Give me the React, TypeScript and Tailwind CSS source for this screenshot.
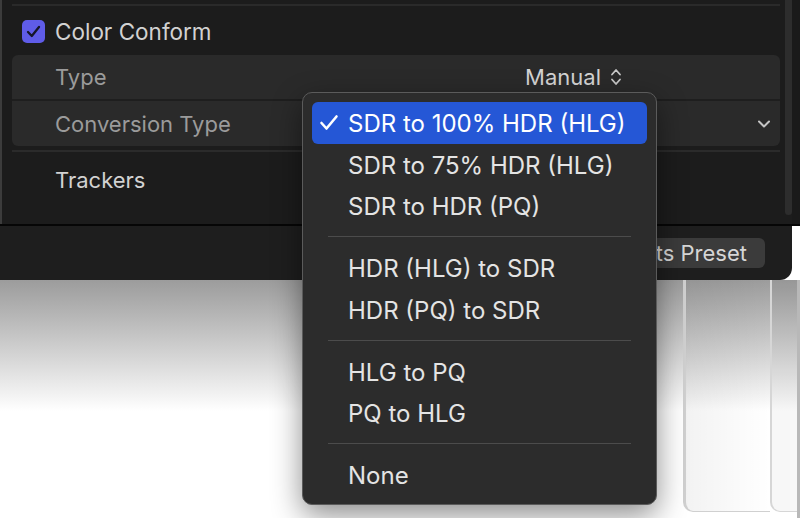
import React from 'react';

type MenuEntry = { label: string; checked?: boolean } | 'sep';

const MENU: MenuEntry[] = [
  { label: 'SDR to 100% HDR (HLG)', checked: true },
  { label: 'SDR to 75% HDR (HLG)' },
  { label: 'SDR to HDR (PQ)' },
  'sep',
  { label: 'HDR (HLG) to SDR' },
  { label: 'HDR (PQ) to SDR' },
  'sep',
  { label: 'HLG to PQ' },
  { label: 'PQ to HLG' },
  'sep',
  { label: 'None' },
];

const UpDown = () => (
  <svg width="12" height="20" viewBox="0 0 12 20" fill="none" stroke="currentColor" strokeWidth="1.8" strokeLinecap="round" strokeLinejoin="round">
    <path d="M2 7.5 L6 3 L10 7.5" />
    <path d="M2 12.5 L6 17 L10 12.5" />
  </svg>
);

const ChevronDown = () => (
  <svg width="14" height="10" viewBox="0 0 14 10" fill="none" stroke="currentColor" strokeWidth="2" strokeLinecap="round" strokeLinejoin="round">
    <path d="M2 2.5 L7 7.5 L12 2.5" />
  </svg>
);

const PopupMenu = () => (
  <div className="absolute left-[302px] top-[92px] w-[355px] h-[413px] rounded-[10px] border border-[#5b5b5b] bg-[#2c2c2c] px-[9px] pt-[9px] shadow-[0_10px_30px_rgba(0,0,0,0.45)]">
    {MENU.map((m, i) =>
      m === 'sep' ? (
        <div key={i} className="h-[20.5px] flex items-center px-[16px]">
          <div className="h-px w-full bg-[#4c4c4c]" />
        </div>
      ) : (
        <div
          key={i}
          className={
            m.checked
              ? 'relative h-[41.5px] flex items-center pl-[36px] rounded-[6px] bg-[#2557d6] text-white'
              : 'relative h-[41.5px] flex items-center pl-[36px] text-[#e4e4e4]'
          }
        >
          {m.checked && (
            <svg className="absolute left-[7px] top-[12px]" width="20" height="17" viewBox="0 0 20 17" fill="none" stroke="currentColor" strokeWidth="2.6" strokeLinecap="round" strokeLinejoin="round">
              <path d="M2.5 9 L7.5 14.5 L17.5 2.5" />
            </svg>
          )}
          <span className="pt-[3px] text-[24px] leading-none">{m.label}</span>
        </div>
      )
    )}
  </div>
);

export default function App() {
  return (
    <div className="relative w-[800px] h-[518px] overflow-hidden bg-white font-['Inter','Noto_Sans',sans-serif]">
      {/* inspector panel */}
      <div className="h-[224px] flex bg-[#1c1c1c] border-l-2 border-[#3c3c3c]">
        <div className="w-[778px] pl-[10px] flex flex-col">
          <div className="h-[4px]" />
          <div className="h-[2px] bg-[#2a2a2a]" />
          <div className="h-[49px] flex items-center pl-[10px] pt-[2px] gap-[10px]">
            <div className="w-[23px] h-[23px] rounded-[5px] bg-[#5f5ce8] flex items-center justify-center">
              <svg width="15" height="13" viewBox="0 0 15 13" fill="none" stroke="#15162a" strokeWidth="2.3" strokeLinecap="round" strokeLinejoin="round">
                <path d="M2 7 L5.8 11 L13 2" />
              </svg>
            </div>
            <span className="pt-[2px] text-[22.5px] leading-none text-[#d2d2d2]">Color Conform</span>
          </div>
          <div className="h-[91px] rounded-[6px] bg-[#2a2a2a] flex flex-col overflow-hidden">
            <div className="h-[44px] flex items-center pl-[43px] pr-[158px] text-[22px] leading-none">
              <span className="flex-1 text-[#9b9b9b]">Type</span>
              <span className="text-[#d4d4d4]">Manual</span>
              <span className="ml-[9px] text-[#c8c8c8]"><UpDown /></span>
            </div>
            <div className="h-[2px] bg-[#1e1e1e]" />
            <div className="h-[45px] flex items-center pl-[43px] pr-[9px] text-[22px] leading-none">
              <span className="flex-1 text-[#9b9b9b]">Conversion Type</span>
              <span className="text-[#c4c4c4]"><ChevronDown /></span>
            </div>
          </div>
          <div className="h-[4px]" />
          <div className="h-[2px] bg-[#2b2b2b]" />
          <div className="h-[56px] flex items-center pl-[43px]">
            <span className="text-[22px] leading-none text-[#d2d2d2]">Trackers</span>
          </div>
        </div>
        <div className="w-[5px]" />
        <div className="w-[7px] h-[215px] rounded-b-[4px] bg-[#2d2d2d]" />
        <div className="flex-1 bg-[#1a1a1a]" />
      </div>
      <div className="h-[2px] bg-[#060606]" />
      {/* bottom bar */}
      <div className="w-[792px] h-[54px] rounded-br-[12px] bg-[#1e1e1e] flex items-center justify-end pr-[27px]">
        <div className="h-[30px] rounded-[6px] bg-[#3b3b3b] px-[18px] flex items-center text-[22px] leading-none text-[#d6d6d6]">
          Save Effects Preset
        </div>
      </div>
      {/* viewer area below */}
      <div className="h-[238px] flex bg-linear-to-b from-[#9c9c9c] to-white to-[55%]">
        <div className="flex-1" />
        <div className="w-[87px] mb-[6px] rounded-bl-[10px] border-l-[3px] border-b border-[#d0d0d0] bg-linear-to-r from-black/5 to-transparent" />
        <div className="w-[27px] mb-[6px] rounded-bl-[10px] border-l-[2px] border-b border-[#d6d6d6] bg-black/[0.03]" />
        <div className="w-[3px] bg-[#b8b8b8]" />
      </div>
      <PopupMenu />
    </div>
  );
}
